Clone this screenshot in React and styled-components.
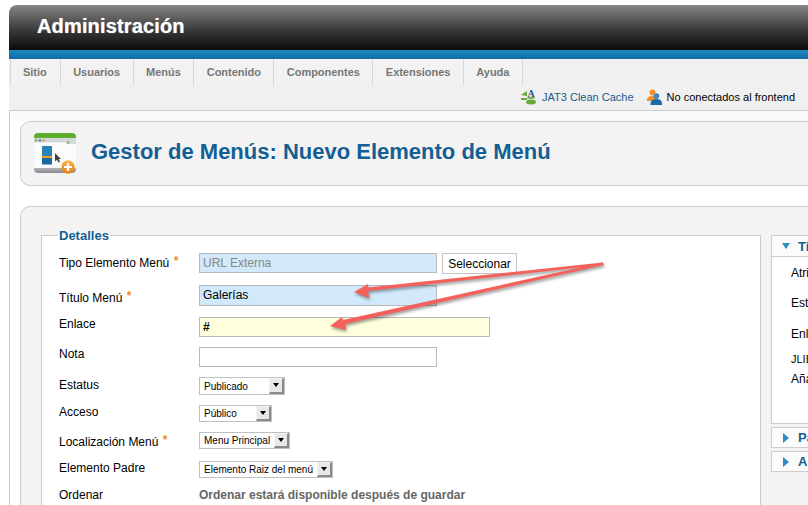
import styled, { createGlobalStyle } from "styled-components";

const GlobalStyle = createGlobalStyle`
html, body {
  margin: 0;
  padding: 0;
  background: #fff;
  overflow: hidden;
}
* {
  box-sizing: border-box;
}
`

const menuItems = ["Sitio", "Usuarios", "Menús", "Contenido", "Componentes", "Extensiones", "Ayuda"]

function WindowIcon() {
    return (
        <svg width="44" height="42" viewBox="0 0 44 42">
            <defs>
                <linearGradient id="winBase" x1="0" y1="0" x2="0" y2="1">
                    <stop offset="0" stopColor="#dfe2e5" />
                    <stop offset="1" stopColor="#85898d" />
                </linearGradient>
                <linearGradient id="plusDisc" x1="0" y1="0" x2="0" y2="1">
                    <stop offset="0" stopColor="#f9b64a" />
                    <stop offset="1" stopColor="#ea7d12" />
                </linearGradient>
            </defs>
            <rect x="0" y="30" width="42" height="10" rx="4" fill="url(#winBase)" />
            <path d="M0 4 a4 4 0 0 1 4 -4 h34 a4 4 0 0 1 4 4 v1 H0z" fill="#5fae2e" />
            <rect x="0" y="5" width="42" height="6" fill="#d3d8dd" />
            <circle cx="2.200" cy="7.400" r="1.200" fill="#6fb23a" />
            <circle cx="6" cy="7.400" r="1.200" fill="#2f86c2" />
            <circle cx="9.600" cy="7.400" r="1.200" fill="#eb9a2a" />
            <rect x="0" y="9.500" width="32" height="1.500" fill="#fff" />
            <rect x="33" y="8.500" width="2" height="2" fill="#6fb23a" />
            <rect x="0" y="11" width="42" height="24" fill="#fbfbfb" />
            <rect x="8" y="13" width="10" height="10" fill="#2a82bb" />
            <rect x="8" y="23" width="10" height="2" fill="#ef9b25" />
            <rect x="8" y="25" width="10" height="6.500" fill="#17699f" />
            <path d="M21 20 L21 28.500 L23 26.800 L24.500 29.500 L26 28.800 L24.800 26 L27 26 Z" fill="#444" />
            <circle cx="34" cy="34" r="6.700" fill="url(#plusDisc)" />
            <path d="M34 30 v8 M30 34 h8" stroke="#fff" strokeWidth="2.200" />
        </svg>
    )
}

function CacheIcon() {
    return (
        <svg width="17" height="16" viewBox="0 0 17 16">
            <path d="M7 2 L1 6 L7 7 Z" fill="#69a83a" />
            <path d="M1 9 h6 v2 h-6z" fill="#69a83a" />
            <ellipse cx="11" cy="13" rx="5" ry="2.500" fill="#69a83a" />
            <ellipse cx="11" cy="8.800" rx="4" ry="1" fill="#69a83a" />
            <text x="7.500" y="8" fontFamily="'Liberation Serif', serif" fontWeight="700" fontSize="10" fill="#2c4f86">A</text>
        </svg>
    )
}

function UserIcon() {
    return (
        <svg width="15" height="16" viewBox="0 0 15 16">
            <circle cx="5.500" cy="3.500" r="3" fill="#ef9226" />
            <path d="M0 11 q0 -4 5.500 -4 q5 0 5 4 v1 H0z" fill="#ef9226" />
            <circle cx="9.500" cy="7" r="2.800" fill="#3b86c4" />
            <path d="M3.500 15 q0 -5 6 -5 q5.500 0 5.500 5 v1 H3.500z" fill="#1d6aa5" />
        </svg>
    )
}

function SelectField({ width, height, label }) {
    return (
        <StyledSelect $width={width} $height={height}>
            <StyledSelectText>{label}</StyledSelectText>
            <StyledSelectArrow />
        </StyledSelect>
    )
}

function Arrows() {
    return (
        <StyledArrows width="808" height="505" viewBox="0 0 808 505">
            <polygon points="603,262.500 603.500,265 368,291 369,298 354,292 368,284 368,287.500" fill="#f4605a" />
            <polygon points="603,262.500 603.500,265 345,324 346,330 330,326 342,317 343,320" fill="#f4605a" />
        </StyledArrows>
    )
}

export default function App() {
    return (
        <StyledPage>
            <GlobalStyle />
            <StyledHeader>
                <StyledBrand>Administración</StyledBrand>
            </StyledHeader>
            <StyledBlueBar />

            <StyledMenuBar>
                <StyledTabs>
                    {menuItems.map((item) => (
                        <StyledTab key={item}>{item}</StyledTab>
                    ))}
                </StyledTabs>
                <StyledStatus>
                    <StyledStatusItem>
                        <CacheIcon />
                        <StyledCacheLink>JAT3 Clean Cache</StyledCacheLink>
                    </StyledStatusItem>
                    <StyledStatusItem>
                        <UserIcon />
                        <span>No conectados al frontend</span>
                    </StyledStatusItem>
                </StyledStatus>
            </StyledMenuBar>

            <StyledMain>
                <StyledTitleBox>
                    <WindowIcon />
                    <StyledTitle>Gestor de Menús: Nuevo Elemento de Menú</StyledTitle>
                </StyledTitleBox>

                <StyledContent>
                    <StyledFieldset>
                        <StyledLegend>Detalles</StyledLegend>

                        <StyledRow $height={32}>
                            <StyledLabel $top={1}>Tipo Elemento Menú <StyledStar>*</StyledStar></StyledLabel>
                            <StyledInput $width={238} $height={20} $bg="#d2e9fb" $color="#888" readOnly value="URL Externa" />
                            <StyledSelectButton>Seleccionar</StyledSelectButton>
                        </StyledRow>
                        <StyledRow $height={32}>
                            <StyledLabel $top={4}>Título Menú <StyledStar>*</StyledStar></StyledLabel>
                            <StyledInput $width={238} $height={21} $bg="#d2e9fb" $lift={2} readOnly value="Galerías" />
                        </StyledRow>
                        <StyledRow $height={30}>
                            <StyledLabel $top={0}>Enlace</StyledLabel>
                            <StyledInput $width={291} $height={20} $bg="#ffffdd" $weight={700} readOnly value="#" />
                        </StyledRow>
                        <StyledRow $height={30}>
                            <StyledLabel $top={0}>Nota</StyledLabel>
                            <StyledInput $width={238} $height={20} $bg="#fff" readOnly value="" />
                        </StyledRow>
                        <StyledRow $height={28}>
                            <StyledLabel $top={1}>Estatus</StyledLabel>
                            <SelectField width={86} height={18} label="Publicado" />
                        </StyledRow>
                        <StyledRow $height={27}>
                            <StyledLabel $top={0}>Acceso</StyledLabel>
                            <SelectField width={73} height={17} label="Público" />
                        </StyledRow>
                        <StyledRow $height={29}>
                            <StyledLabel $top={1}>Localización Menú <StyledStar>*</StyledStar></StyledLabel>
                            <SelectField width={91} height={17} label="Menu Principal" />
                        </StyledRow>
                        <StyledRow $height={27}>
                            <StyledLabel $top={0}>Elemento Padre</StyledLabel>
                            <SelectField width={134} height={17} label="Elemento Raiz del menú" />
                        </StyledRow>
                        <StyledRow $height={20}>
                            <StyledLabel $top={0}>Ordenar</StyledLabel>
                            <StyledNotice>Ordenar estará disponible después de guardar</StyledNotice>
                        </StyledRow>
                    </StyledFieldset>

                    <StyledSide>
                        <StyledPanel>
                            <StyledPanelHead $open>
                                <StyledTriangle $open />
                                <StyledPanelTitle>Tipo de Elemento</StyledPanelTitle>
                            </StyledPanelHead>
                            <StyledPanelBody>
                                <StyledPanelLine $height={30}>Atributos</StyledPanelLine>
                                <StyledPanelLine $height={31}>Estilo</StyledPanelLine>
                                <StyledPanelLine $height={25}>Enlace</StyledPanelLine>
                                <StyledPanelLine $height={20} $small>JLIB_FORM</StyledPanelLine>
                                <StyledPanelLine $height={20}>Añadir</StyledPanelLine>
                            </StyledPanelBody>
                        </StyledPanel>
                        <StyledPanel>
                            <StyledPanelHead>
                                <StyledTriangle />
                                <StyledPanelTitle>Parámetros</StyledPanelTitle>
                            </StyledPanelHead>
                        </StyledPanel>
                        <StyledPanel>
                            <StyledPanelHead>
                                <StyledTriangle />
                                <StyledPanelTitle>Asociaciones</StyledPanelTitle>
                            </StyledPanelHead>
                        </StyledPanel>
                    </StyledSide>
                </StyledContent>
            </StyledMain>

            <Arrows />
        </StyledPage>
    )
}

const StyledPage = styled.div`
position: relative;
width: 808px;
height: 505px;
overflow: hidden;
padding: 5px 0 0 9px;
background: #fff;
font-family: "Liberation Sans", Arial, sans-serif;
font-size: 12px;
color: #000;
`

const StyledHeader = styled.div`
display: flex;
align-items: center;
height: 45px;
padding: 0 0 3px 28px;
border-radius: 8px 0 0 0;
background: linear-gradient(#868686, #3a3a3a 55%, #0a0a0a);
`

const StyledBrand = styled.div`
color: #fff;
font-size: 20px;
font-weight: 700;
letter-spacing: .15px;
text-shadow: 0 0 1px rgba(255, 255, 255, .7);
`

const StyledBlueBar = styled.div`
height: 9px;
background: linear-gradient(#1b88c0, #0f6ea3);
`

const StyledMenuBar = styled.div`
height: 52px;
padding-left: 1px;
background: #f0f0f0;
border-bottom: 1px solid #ccc;
`

const StyledTabs = styled.div`
display: flex;
height: 26px;
`

const StyledTab = styled.div`
display: flex;
align-items: center;
padding: 0 12.500px;
border-right: 1px solid #d6d6d6;
background: #f2f2f2;
color: #777;
font-size: 11px;
font-weight: 700;
letter-spacing: -.03px;
&:first-child {
    border-left: 1px solid #d6d6d6;
    padding: 0 13px 0 12px;
}
`

const StyledStatus = styled.div`
display: flex;
justify-content: flex-end;
gap: 13px;
padding: 3px 13px 0 0;
font-size: 11px;
`

const StyledStatusItem = styled.div`
display: flex;
align-items: center;
gap: 5px;
height: 18px;
`

const StyledCacheLink = styled.span`
color: #1a5a8c;
`

const StyledMain = styled.div`
height: 400px;
padding: 10px 0 0 10px;
border-left: 1px solid #ccc;
background: linear-gradient(#fafafa 10px, #fff 10px);
`

const StyledTitleBox = styled.div`
display: flex;
align-items: center;
gap: 13px;
height: 65px;
margin-right: -20px;
padding: 0 0 0 13px;
background: #f3f3f3;
border: 1px solid #ccc;
border-radius: 10px;
`

const StyledTitle = styled.h1`
margin: 0 0 4px;
color: #135f94;
font-size: 22px;
font-weight: 700;
`

const StyledContent = styled.div`
display: flex;
align-items: flex-start;
gap: 10px;
width: 900px;
height: 400px;
margin-top: 20px;
padding: 21px 0 0 20px;
background: #f3f3f3;
border: 1px solid #ccc;
border-radius: 10px;
`

const StyledFieldset = styled.fieldset`
flex: none;
width: 720px;
height: 380px;
margin: 0;
padding: 10px 0 0 17px;
background: #fff;
border: 1px solid #ccc;
`

const StyledLegend = styled.legend`
margin-left: -1px;
padding: 0 1px;
color: #135f94;
font-size: 13px;
font-weight: 700;
`

const StyledRow = styled.div`
display: flex;
align-items: flex-start;
height: ${(props) => props.$height}px;
`

const StyledLabel = styled.label`
flex: none;
width: 140px;
padding-top: ${(props) => props.$top}px;
font-size: 12px;
line-height: 14px;
`

const StyledStar = styled.span`
margin-left: 1px;
color: #f08a24;
font-weight: 700;
vertical-align: 2px;
`

const StyledInput = styled.input`
display: block;
width: ${(props) => props.$width}px;
height: ${(props) => props.$height}px;
padding: 0 3px ${(props) => props.$lift || 0}px;
background: ${(props) => props.$bg};
border: 1px solid #b9b9b9;
border-radius: 0;
outline: none;
color: ${(props) => props.$color || "#000"};
font-family: inherit;
font-size: 12px;
font-weight: ${(props) => props.$weight || 400};
`

const StyledSelectButton = styled.button`
width: 75px;
height: 21px;
margin-left: 5px;
padding: 0;
background: #fff;
border: 1px solid #c4c4c4;
color: #000;
font-family: inherit;
font-size: 12px;
`

const StyledSelect = styled.div`
display: flex;
align-items: center;
justify-content: space-between;
width: ${(props) => props.$width}px;
height: ${(props) => props.$height}px;
padding-left: 4px;
background: #fff;
border: 1px solid #c0c0c0;
`

const StyledSelectText = styled.span`
font-size: 10px;
white-space: nowrap;
`

const StyledSelectArrow = styled.span`
position: relative;
flex: none;
align-self: stretch;
width: 15px;
background: #e8e8e8;
border-top: 1px solid #f5f5f5;
border-left: 1px solid #f5f5f5;
border-right: 2px solid #8a8a8a;
border-bottom: 2px solid #8a8a8a;
&::after {
    content: "";
    position: absolute;
    left: 3px;
    top: 4px;
    border-left: 3px solid transparent;
    border-right: 3px solid transparent;
    border-top: 4px solid #000;
}
`

const StyledNotice = styled.span`
color: #666;
font-size: 12px;
font-weight: 700;
line-height: 14px;
`

const StyledSide = styled.div`
display: flex;
flex-direction: column;
gap: 3px;
flex: none;
width: 300px;
margin-top: 7px;
`

const StyledPanel = styled.div`
background: #fff;
border: 1px solid #ccc;
`

const StyledPanelHead = styled.div`
display: flex;
align-items: center;
gap: ${(props) => (props.$open ? "8px" : "9px")};
height: ${(props) => (props.$open ? "21px" : "19px")};
padding-left: ${(props) => (props.$open ? "10px" : "11px")};
background: #fbfbfb;
border-bottom: ${(props) => (props.$open ? "1px solid #ccc" : "none")};
`

const StyledTriangle = styled.span`
flex: none;
width: 0;
height: 0;
${(props) => props.$open
    ? `border-left: 4.5px solid transparent;
       border-right: 4.5px solid transparent;
       border-top: 6px solid #2b8cc4;`
    : `border-top: 5px solid transparent;
       border-bottom: 5px solid transparent;
       border-left: 6px solid #2b8cc4;`}
`

const StyledPanelTitle = styled.span`
color: #135f94;
font-size: 13px;
font-weight: 700;
white-space: nowrap;
`

const StyledPanelBody = styled.div`
height: 166px;
padding: 9px 0 0 19px;
`

const StyledPanelLine = styled.div`
height: ${(props) => props.$height}px;
font-size: ${(props) => (props.$small ? "11px" : "12px")};
line-height: 14px;
white-space: nowrap;
`

const StyledArrows = styled.svg`
position: absolute;
left: 0;
top: 0;
filter: drop-shadow(1px 2px 1.5px rgba(0, 0, 0, .4));
pointer-events: none;
`
